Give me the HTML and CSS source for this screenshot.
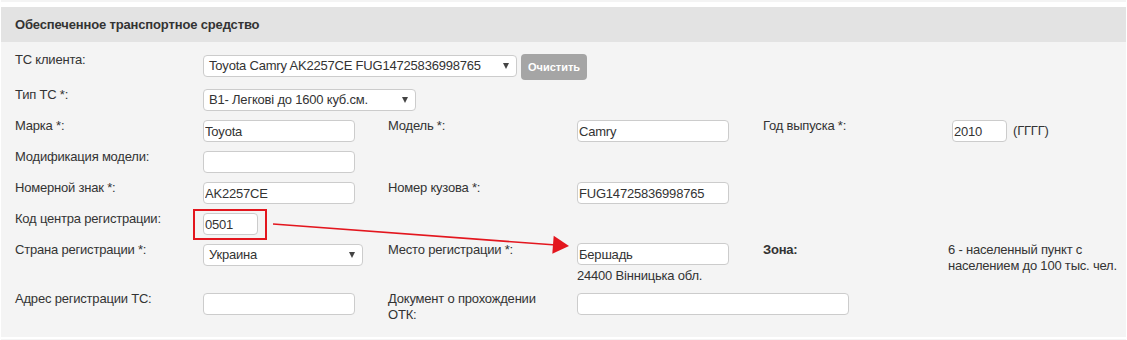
FILE: index.html
```html
<!DOCTYPE html>
<html lang="ru">

<head>
    <meta charset="UTF-8" />
    <title>Обеспеченное транспортное средство</title>
    <link rel="stylesheet" href="styles.css">
</head>

<body>
    <div class="page">
        <div class="prev-panel"></div>

        <div class="panel">
            <div class="panel-heading">Обеспеченное транспортное средство</div>
            <div class="panel-body">

                <!-- ТС клиента -->
                <div class="form-row row-first">
                    <div class="cell label">ТС клиента:</div>
                    <div class="cell field wide">
                        <div class="select select-client">
                            <span>Toyota Camry AK2257CE FUG14725836998765</span><i class="caret"></i>
                        </div>
                        <button class="btn-clear">Очистить</button>
                    </div>
                </div>

                <!-- Тип ТС -->
                <div class="form-row">
                    <div class="cell label">Тип ТС *:</div>
                    <div class="cell field wide">
                        <div class="select select-type">
                            <span>В1- Легкові до 1600 куб.см.</span><i class="caret"></i>
                        </div>
                    </div>
                </div>

                <!-- Марка / Модель / Год -->
                <div class="form-row">
                    <div class="cell label">Марка *:</div>
                    <div class="cell field"><input class="input" type="text" value="Toyota"></div>
                    <div class="cell label">Модель *:</div>
                    <div class="cell field"><input class="input" type="text" value="Camry"></div>
                    <div class="cell label">Год выпуска *:</div>
                    <div class="cell field last year">
                        <input class="input input-short" type="text" value="2010">
                        <span class="hint">(ГГГГ)</span>
                    </div>
                </div>

                <div class="form-row">
                    <div class="cell label">Модификация модели:</div>
                    <div class="cell field"><input class="input" type="text" value=""></div>
                </div>

                <div class="form-row">
                    <div class="cell label">Номерной знак *:</div>
                    <div class="cell field"><input class="input" type="text" value="AK2257CE"></div>
                    <div class="cell label">Номер кузова *:</div>
                    <div class="cell field"><input class="input" type="text" value="FUG14725836998765"></div>
                </div>

                <div class="form-row">
                    <div class="cell label">Код центра регистрации:</div>
                    <div class="cell field"><input class="input input-short" type="text" value="0501"></div>
                </div>

                <!-- Регистрация -->
                <div class="form-row">
                    <div class="cell label">Страна регистрации *:</div>
                    <div class="cell field">
                        <div class="select select-country">
                            <span>Украина</span><i class="caret"></i>
                        </div>
                    </div>
                    <div class="cell label">Место регистрации *:</div>
                    <div class="cell field place">
                        <input class="input" type="text" value="Бершадь">
                        <div class="sub-text">24400 Вінницька обл.</div>
                    </div>
                    <div class="cell label bold">Зона:</div>
                    <div class="cell field last zone">6 - населенный пункт с населением до 100 тыс. чел.</div>
                </div>

                <div class="form-row">
                    <div class="cell label">Адрес регистрации ТС:</div>
                    <div class="cell field"><input class="input" type="text" value=""></div>
                    <div class="cell label">Документ о прохождении ОТК:</div>
                    <div class="cell field"><input class="input input-long" type="text" value=""></div>
                </div>

            </div>
        </div>

        <div class="next-panel"></div>

        <!-- пометки поверх скриншота -->
        <svg class="annotation" width="1127" height="340" viewBox="0 0 1127 340">
            <rect x="194" y="210" width="72" height="29" fill="none" stroke="#e3161e" stroke-width="2" />
            <line x1="273" y1="224" x2="556" y2="245" stroke="#e3161e" stroke-width="1.6" />
            <polygon points="569,246 553.7,235.8 552.3,253.8" fill="#e3161e" />
        </svg>
    </div>
</body>

</html>
```

FILE: styles.css
```css
* {
    margin: 0;
    padding: 0;
    box-sizing: border-box;
}

html,
body {
    width: 100%;
    height: 100%;
    overflow: hidden;
    background-color: #fff;
    font-family: 'Liberation Sans', Arial, sans-serif;
    font-size: 13px;
    letter-spacing: -0.2px;
    color: #333;
}

.page {
    position: relative;
    width: 1127px;
    height: 340px;
}

.prev-panel {
    height: 2px;
    margin: 0 1px 5px;
    background-color: #f4f4f4;
}

.next-panel {
    height: 4px;
    margin: 2px 1px 0;
    background-color: #f4f4f4;
}

.panel {
    margin: 0 1px;
    background-color: #f4f4f4;
}

.panel-heading {
    height: 35px;
    line-height: 35px;
    padding-left: 14px;
    background-color: #e3e3e3;
    font-weight: bold;
    letter-spacing: -0.15px;
    color: #333;
}

.panel-body {
    display: flex;
    flex-direction: column;
    gap: 7px;
    padding: 10px 0 14px;
}

.form-row {
    display: grid;
    grid-template-columns: 188px 185px 189px 186px 189px 1fr;
    align-items: start;
}

.cell {
    padding-left: 14px;
}

.cell.last {
    padding-left: 10px;
}

.label {
    line-height: 16px;
    padding-right: 10px;
}

.bold {
    font-weight: bold;
}

.field {
    padding-top: 2px;
}

.wide {
    grid-column: 2 / -1;
    display: flex;
    align-items: flex-start;
}

/* поля ввода */
.input {
    display: block;
    width: 152px;
    height: 22px;
    padding: 0 1px;
    border: 1px solid #ccc;
    border-radius: 4px;
    background-color: #fff;
    font-family: inherit;
    font-size: 13px;
    letter-spacing: -0.2px;
    line-height: 20px;
    color: #333;
    outline: none;
}

.input-short {
    width: 55px;
}

.input-long {
    width: 272px;
}

.year {
    display: flex;
    align-items: center;
    gap: 6px;
}

.year .input {
    margin-left: 4px;
}

.hint {
    line-height: 20px;
}

.place {
    padding-top: 1px;
}

.sub-text {
    margin-top: 3px;
    line-height: 16px;
}

.zone {
    padding-top: 0;
    line-height: 16px;
}

/* селекты */
.select {
    display: flex;
    align-items: center;
    justify-content: space-between;
    height: 22px;
    padding: 0 7px 0 5px;
    border: 1px solid #ccc;
    border-radius: 4px;
    background-color: #fff;
    line-height: 20px;
    white-space: nowrap;
}

.select-client {
    width: 314px;
    margin-top: 1px;
}

.select-type {
    width: 213px;
}

.select-country {
    width: 160px;
}

.caret {
    width: 0;
    height: 0;
    border-left: 3.5px solid transparent;
    border-right: 3.5px solid transparent;
    border-top: 6px solid #444;
}

.btn-clear {
    width: 66px;
    height: 26px;
    margin-left: 4px;
    border: none;
    border-radius: 4px;
    background-color: #a5a5a5;
    color: #fff;
    font-family: inherit;
    font-size: 11px;
    font-weight: bold;
    letter-spacing: 0;
}

.annotation {
    position: absolute;
    top: 0;
    left: 0;
    pointer-events: none;
}
```
